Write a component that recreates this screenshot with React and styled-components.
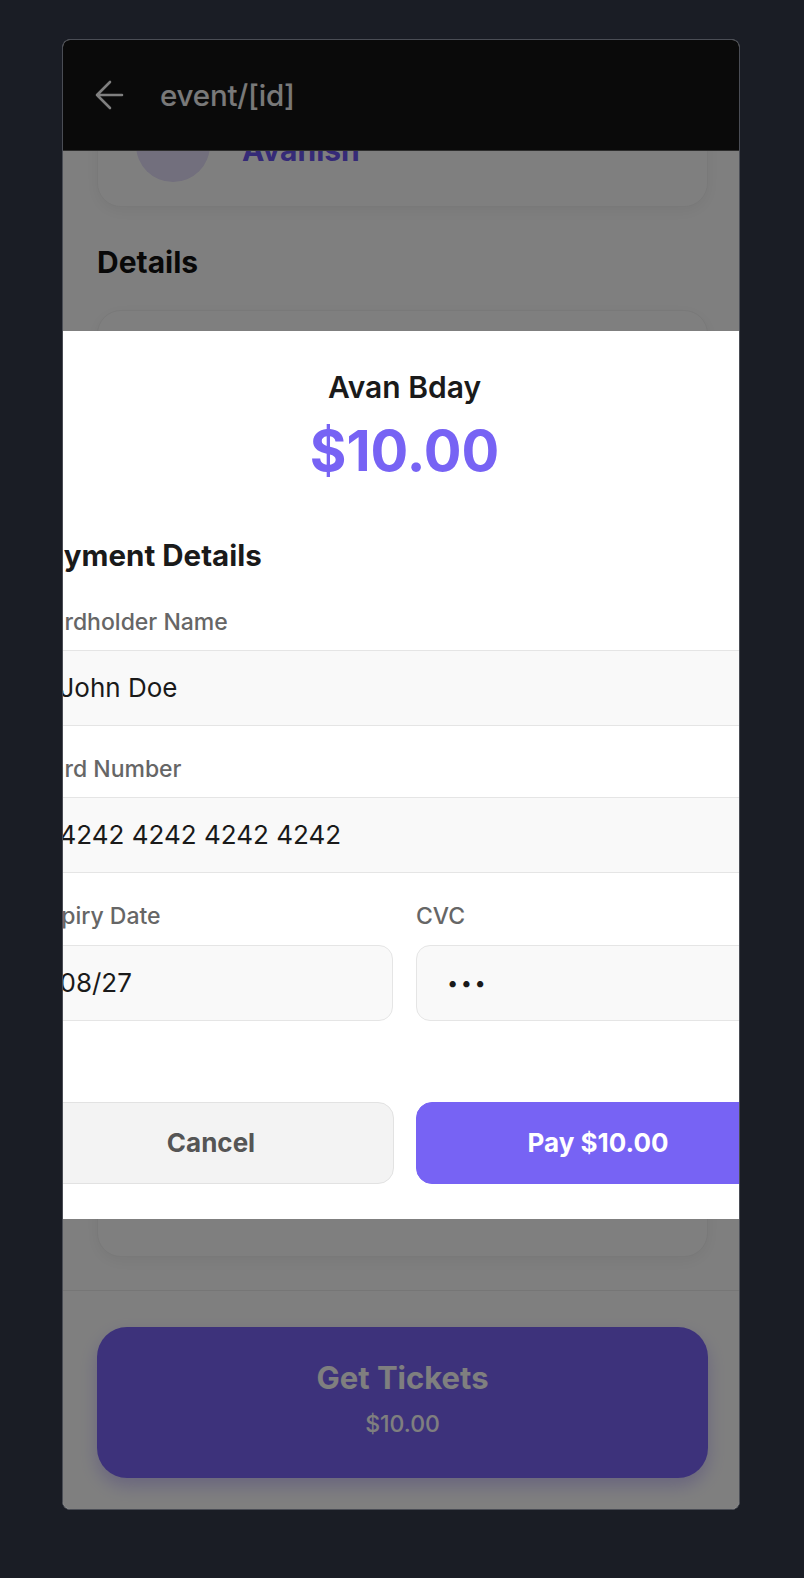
import React from 'react';
import styled, { createGlobalStyle } from 'styled-components';

const GlobalStyle = createGlobalStyle`
  html, body {
    margin: 0;
    padding: 0;
    background: #1a1d25;
    font-family: Inter, "Noto Sans", sans-serif;
  }
  * {
    box-sizing: border-box;
  }
`;

const Page = styled.div`
  width: 804px;
  height: 1578px;
  padding-top: 39px;
`;

const Phone = styled.div`
  position: relative;
  width: 678px;
  height: 1471px;
  margin-left: 62px;
  border: 1.5px solid #4a4d55;
  border-radius: 8px;
  overflow: hidden;
  display: flex;
  flex-direction: column;
  background: #ffffff;
`;

const Header = styled.header`
  flex: 0 0 auto;
  height: 111px;
  background: #141414;
  border-bottom: 1px solid #5a5a5a;
  display: flex;
  align-items: center;
  gap: 36px;
  padding: 0 0 0 31px;
  color: #ffffff;
`;

const HeaderTitle = styled.span`
  font-size: 29.5px;
  font-weight: 500;
  color: #f2f2f2;
  letter-spacing: -0.2px;
`;

const Body = styled.main`
  flex: 1;
  overflow: hidden;
  padding: 0 31px 0 34px;
`;

const BodyInner = styled.div`
  margin-top: -68px;
  display: flex;
  flex-direction: column;
`;

const Card = styled.section`
  background: #ffffff;
  border-radius: 24px;
  box-shadow: 0 4px 16px rgba(0, 0, 0, 0.06);
  border: 1px solid #f2f2f2;
  min-height: ${p => p.$minHeight || 0}px;
`;

const HostRow = styled.div`
  display: flex;
  align-items: center;
  gap: 32px;
  padding: 24px 38px;
`;

const Avatar = styled.div`
  width: 74px;
  height: 74px;
  border-radius: 50%;
  background: #e4defa;
`;

const HostName = styled.div`
  font-size: 30px;
  font-weight: 700;
  color: #6a55ee;
  padding-top: 10px;
`;

const SectionTitle = styled.h2`
  margin: 37px 0 30px;
  font-size: 30px;
  line-height: 36px;
  font-weight: 700;
  color: #111111;
`;

const Footer = styled.footer`
  flex: 0 0 auto;
  border-top: 1px solid #ececec;
  padding: 36px 31px 31px 34px;
`;

const TicketButton = styled.button`
  width: 100%;
  height: 151px;
  border: none;
  border-radius: 30px;
  background: #7a65f6;
  box-shadow: 0 8px 18px rgba(122, 101, 246, 0.35);
  display: flex;
  flex-direction: column;
  align-items: center;
  justify-content: center;
  gap: 14px;
  padding: 0 0 8px;
  font-family: Inter, sans-serif;
  color: #ffffff;
`;

const TicketLabel = styled.span`
  font-size: 31px;
  line-height: 36px;
  font-weight: 700;
`;

const TicketPrice = styled.span`
  font-size: 23px;
  line-height: 28px;
  font-weight: 500;
`;

const Overlay = styled.div`
  position: absolute;
  inset: 0;
  z-index: 10;
  background: rgba(0, 0, 0, 0.5);
  display: flex;
  align-items: center;
  justify-content: center;
`;

const Sheet = styled.div`
  flex: 0 0 808px;
  margin-left: 7px;
  background: #ffffff;
  padding: 40px 28px 35px;
  display: flex;
  flex-direction: column;
`;

const EventName = styled.div`
  text-align: center;
  font-size: 30px;
  line-height: 32px;
  font-weight: 600;
  color: #1a1a1a;
`;

const Amount = styled.div`
  margin-top: 16px;
  text-align: center;
  font-size: 56px;
  line-height: 64px;
  font-weight: 700;
  color: #7763f4;
`;

const FormTitle = styled.h3`
  margin: 55px 0 38px;
  font-size: 29.5px;
  line-height: 34px;
  font-weight: 700;
  color: #1a1a1a;
`;

const Fields = styled.div`
  display: flex;
  flex-direction: column;
  gap: 31px;
`;

const Row = styled.div`
  display: grid;
  grid-template-columns: 1fr 1fr;
  gap: 23px;
`;

const Field = styled.label`
  display: flex;
  flex-direction: column;
  gap: ${p => p.$gap || 16}px;
`;

const Label = styled.span`
  font-size: 23px;
  line-height: 24px;
  font-weight: 500;
  color: #666666;
  padding-left: ${p => p.$indent || 0}px;
`;

const Input = styled.input`
  height: 76px;
  width: 100%;
  padding: 0 30px;
  border: 1.5px solid #e5e5e5;
  border-radius: 14px;
  background: #f9f9f9;
  font-family: Inter, "Noto Sans", sans-serif;
  font-size: ${p => p.$size || 26}px;
  color: #1a1a1a;
  outline: none;
  letter-spacing: ${p => p.$spacing || 0}px;
`;

const Actions = styled.div`
  margin-top: 81px;
  display: grid;
  grid-template-columns: 1fr 1fr;
  gap: 22px;
`;

const ActionButton = styled.button`
  height: 82px;
  border-radius: 16px;
  border: 1.5px solid ${p => (p.$primary ? '#7763f4' : '#e2e2e2')};
  background: ${p => (p.$primary ? '#7763f4' : '#f3f3f3')};
  color: ${p => (p.$primary ? '#ffffff' : '#555555')};
  font-family: Inter, sans-serif;
  font-size: 26px;
  font-weight: 700;
`;

const BackArrow = () => (
  <svg width="30" height="30" viewBox="0 0 30 30" fill="none">
    <path
      d="M28 15H3M16 2L3 15L16 28"
      stroke="#ffffff"
      strokeWidth="2.6"
      strokeLinecap="round"
      strokeLinejoin="round"
    />
  </svg>
);

const App = () => {
  return (
    <Page>
      <GlobalStyle />
      <Phone>
        <Header>
          <BackArrow />
          <HeaderTitle>event/[id]</HeaderTitle>
        </Header>
        <Body>
          <BodyInner>
            <Card>
              <HostRow>
                <Avatar />
                <HostName>Avanish</HostName>
              </HostRow>
            </Card>
            <SectionTitle>Details</SectionTitle>
            <Card $minHeight={947} />
          </BodyInner>
        </Body>
        <Footer>
          <TicketButton>
            <TicketLabel>Get Tickets</TicketLabel>
            <TicketPrice>$10.00</TicketPrice>
          </TicketButton>
        </Footer>

        <Overlay>
          <Sheet>
            <EventName>Avan Bday</EventName>
            <Amount>$10.00</Amount>
            <FormTitle>Payment Details</FormTitle>
            <Fields>
              <Field>
                <Label $indent={6}>Cardholder Name</Label>
                <Input readOnly value="John Doe" />
              </Field>
              <Field>
                <Label $indent={6}>Card Number</Label>
                <Input readOnly value="4242 4242 4242 4242" />
              </Field>
              <Row>
                <Field $gap={17}>
                  <Label $indent={6}>Expiry Date</Label>
                  <Input readOnly value="08/27" />
                </Field>
                <Field $gap={17}>
                  <Label>CVC</Label>
                  <Input readOnly value="•••" $size={20} $spacing={2.5} />
                </Field>
              </Row>
            </Fields>
            <Actions>
              <ActionButton>Cancel</ActionButton>
              <ActionButton $primary>Pay $10.00</ActionButton>
            </Actions>
          </Sheet>
        </Overlay>
      </Phone>
    </Page>
  );
};

export default App;
